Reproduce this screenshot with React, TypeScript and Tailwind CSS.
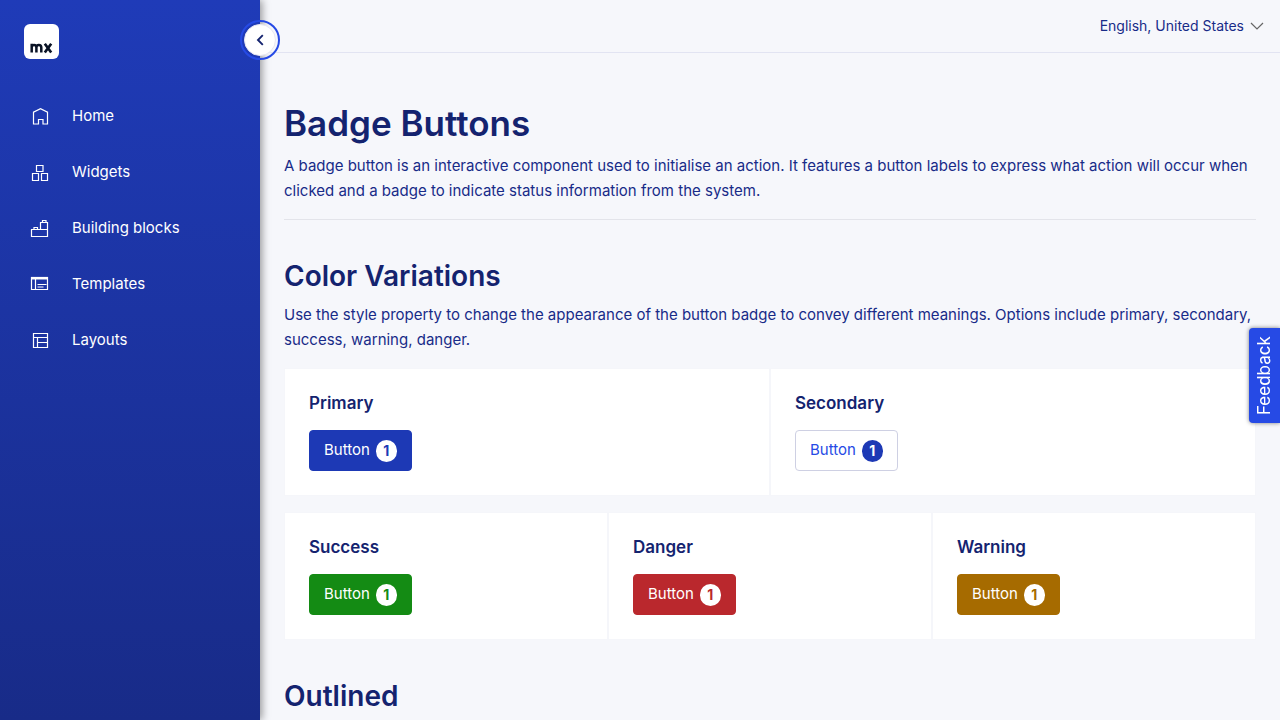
import type { ReactNode } from "react";

function NavIcon({ children }: { children: ReactNode }) {
  return (
    <svg
      aria-hidden="true"
      viewBox="0 0 20 20"
      className="size-5 shrink-0"
      fill="none"
      stroke="currentColor"
      strokeWidth="1.2"
    >
      {children}
    </svg>
  );
}

const navItems = [
  {
    label: "Home",
    icon: (
      <path d="M3.500 18V6.200l7-3.500 7 3.500V18h-4.500v-4.500h-4.500V18z" />
    ),
  },
  {
    label: "Widgets",
    icon: (
      <path d="M6.500 3.500h6.500v6H6.500zM2.500 11.500h6v7h-6zM11.500 11.500h6v7h-6z" />
    ),
  },
  {
    label: "Building blocks",
    icon: (
      <path d="M1.500 11.500h9V4.500h7v14h-16zM10.500 11.500h7M4 11.500v-2h3.500v2M12.500 4.500v-2h3.500v2" />
    ),
  },
  {
    label: "Templates",
    icon: (
      <>
        <path d="M1.500 3.500h16v12h-16zM5.500 5v10.500M7.500 10.500h9M7.500 13h6" />
        <path d="M1 4.200h17" strokeWidth="2.600" />
      </>
    ),
  },
  {
    label: "Layouts",
    icon: (
      <path d="M3.500 3.500h14v14h-14zM3.500 7.500h14M7.500 7.500v10M7.500 12.500h10" />
    ),
  },
];

function Sidebar() {
  return (
    <aside className="relative z-10 w-[260px] shrink-0 bg-linear-to-b from-[#1f3bb8] to-[#182b88] text-white shadow-[2px_0_8px_rgba(0,0,0,0.4)]">
      <a href="#home" aria-label="Mendix" className="ml-6 mt-6 flex size-[35px] rounded-md bg-white">
        <svg aria-hidden="true" viewBox="0 0 35 35" className="size-full" fill="none" stroke="#0a1325" strokeWidth="2.500">
          <path d="M7.700 28.500V19.800M7.700 28.500V23.500c0-3.400 4.700-3.400 4.700 0v5M12.400 23.500c0-3.400 4.900-3.400 4.900 0v5" />
          <path d="M20.800 19.800l6.400 8.700M27.200 19.800l-6.400 8.700" strokeWidth="2.700" />
        </svg>
      </a>
      <button
        type="button"
        aria-label="Collapse menu"
        className="absolute -right-5 top-5 flex size-10 items-center justify-center rounded-full border-2 border-[#264ae5]"
      >
        <span className="flex size-8 items-center justify-center rounded-full border border-[#e7e7f3] bg-white text-[#14236f]">
          <svg aria-hidden="true" viewBox="0 0 16 16" className="size-4" fill="none" stroke="currentColor" strokeWidth="1.900">
            <path d="M10.800 3.200L6 8l4.800 4.800" />
          </svg>
        </span>
      </button>
      <nav className="mt-[29px]">
        <ul>
          {navItems.map((item) => (
            <li key={item.label}>
              <a href="#page" className="flex h-14 items-center gap-[22px] pl-[30px] text-[15px]">
                <NavIcon>{item.icon}</NavIcon>
                {item.label}
              </a>
            </li>
          ))}
        </ul>
      </nav>
    </aside>
  );
}

interface VariationProps {
  title: string;
  button: string;
  badge: string;
}

function Variation({ title, button, badge }: VariationProps) {
  return (
    <section className="border border-[#f5f6fa] bg-white p-6">
      <h3 className="mb-4 text-[17px] leading-[21px] font-semibold">{title}</h3>
      <button
        type="button"
        className={`flex h-[41px] items-center gap-1.5 rounded border px-3.5 text-[15px] ${button}`}
      >
        Button
        <span
          className={`flex h-[22px] w-[21px] items-center justify-center rounded-full text-sm font-bold ${badge}`}
        >
          1
        </span>
      </button>
    </section>
  );
}

export default function App() {
  return (
    <div className="flex min-h-screen bg-[#f6f7fb] font-['Inter',sans-serif] text-[#14236f]">
      <Sidebar />
      <div className="min-w-0 flex-1">
        <header className="flex h-[53px] items-center justify-end border-b border-[#e2e4f2] px-4">
          <button type="button" className="flex items-center gap-1.5 text-sm text-[#182b88]">
            English, United States
            <svg aria-hidden="true" viewBox="0 0 14 14" className="size-3.5" fill="none" stroke="#666" strokeWidth="1.2">
              <path d="M1 4l6 6 6-6" />
            </svg>
          </button>
        </header>
        <main className="px-6 pt-12">
          <h1 className="text-[35px] leading-[44px] font-semibold">Badge Buttons</h1>
          <p className="mt-2 border-b border-[#e3e4ea] pb-4 text-[15px] leading-[25px] text-[#182b88]">
            A badge button is an interactive component used to initialise an action. It features a button labels to
            express what action will occur when clicked and a badge to indicate status information from the system.
          </p>
          <h2 className="mt-10 text-[28px] leading-8 font-semibold">Color Variations</h2>
          <p className="mt-2.5 text-[15px] leading-[25px] text-[#182b88]">
            Use the style property to change the appearance of the button badge to convey different meanings. Options
            include primary, secondary, success, warning, danger.
          </p>
          <div className="mt-4 grid grid-cols-2">
            <Variation title="Primary" button="border-[#1d39b5] bg-[#1d39b5] text-white" badge="bg-white text-[#1d39b5]" />
            <Variation title="Secondary" button="border-[#ced0e3] bg-white text-[#264ae5]" badge="bg-[#1d39b5] text-white" />
          </div>
          <div className="mt-4 grid grid-cols-3">
            <Variation title="Success" button="border-[#148b14] bg-[#148b14] text-white" badge="bg-white text-[#148b14]" />
            <Variation title="Danger" button="border-[#ba282d] bg-[#ba282d] text-white" badge="bg-white text-[#ba282d]" />
            <Variation title="Warning" button="border-[#a66b00] bg-[#a66b00] text-white" badge="bg-white text-[#a66b00]" />
          </div>
          <h2 className="mt-10 text-[28px] leading-8 font-semibold">Outlined</h2>
        </main>
      </div>
      <button
        type="button"
        className="fixed top-[328px] right-0 z-20 flex h-[95px] w-[31px] rotate-180 items-center justify-center rounded-r bg-[#264ae5] text-[17px] text-white shadow-[0_0_4px_rgba(0,0,0,0.5)] [writing-mode:vertical-rl]"
      >
        Feedback
      </button>
    </div>
  );
}
